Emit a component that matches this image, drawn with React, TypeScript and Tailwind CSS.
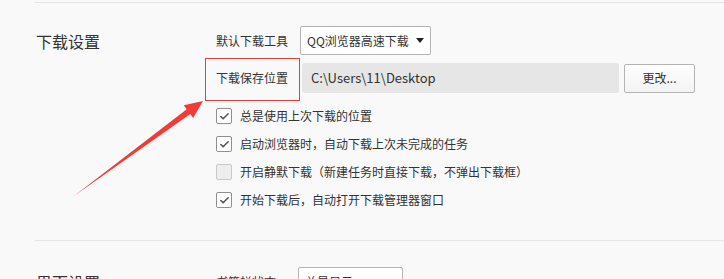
import { Check } from 'lucide-react';

const options = [
  { label: '总是使用上次下载的位置', checked: true },
  { label: '启动浏览器时，自动下载上次未完成的任务', checked: true },
  { label: '开启静默下载（新建任务时直接下载，不弹出下载框）', checked: false },
  { label: '开始下载后，自动打开下载管理器窗口', checked: true },
];

function SelectBox({ value, width }: { value: string; width: string }) {
  return (
    <div
      className={`flex h-[29px] ${width} items-center justify-between rounded-[2px] border border-[#b4b4b4] bg-white pl-[6px] pr-[6px] text-[12px]`}
    >
      <span className="whitespace-nowrap">{value}</span>
      <span className="h-0 w-0 border-x-[4px] border-t-[5px] border-x-transparent border-t-[#222]" />
    </div>
  );
}

function Checkbox({ checked }: { checked: boolean }) {
  return (
    <span
      className={`flex h-[16px] w-[16px] items-center justify-center rounded-[2px] border ${
        checked ? 'border-[#8f8f8f] bg-white' : 'border-[#c8c8c8] bg-[#eeeeee]'
      }`}
    >
      {checked && <Check size={11} strokeWidth={3.5} className="text-[#555]" />}
    </span>
  );
}

export default function App() {
  return (
    <div className="relative h-[279px] w-[724px] overflow-hidden bg-[#f9f9f9] font-['Noto_Sans_CJK_SC','Microsoft_YaHei',sans-serif] text-[#333]">
      <div className="pl-[35px] pt-[2px]">
        {/* 下载设置 */}
        <section className="flex border-t border-[#e6e6e6] pb-[26px] pt-[23px]">
          <h2 className="mt-[5px] w-[181px] pl-px text-[16px] leading-[20px]">下载设置</h2>
          <div className="flex flex-col">
            <div className="flex h-[29px] items-center">
              <span className="w-[84px] text-[12px]">默认下载工具</span>
              <SelectBox value="QQ浏览器高速下载" width="w-[131px]" />
            </div>
            <div className="mt-[8px] flex h-[30px] items-center">
              <span className="w-[86px] text-[12px]">下载保存位置</span>
              <div className="flex h-[30px] w-[317px] items-center rounded-[3px] bg-[#e6e6e6] pl-[9px] text-[13px]">
                C:\Users\11\Desktop
              </div>
              <button className="ml-[5px] h-[29px] w-[71px] rounded-[2px] border border-[#b4b4b4] bg-gradient-to-b from-white to-[#f3f3f3] text-[12px]">
                更改...
              </button>
            </div>
            <ul className="mt-[9px] flex flex-col">
              {options.map((o) => (
                <li key={o.label} className="flex h-[28px] items-center gap-[8px] text-[12px]">
                  <Checkbox checked={o.checked} />
                  <span className="whitespace-nowrap">{o.label}</span>
                </li>
              ))}
            </ul>
          </div>
        </section>

        {/* 界面设置 */}
        <section className="flex border-t border-[#e6e6e6] pt-[26px]">
          <h2 className="mt-[5px] w-[181px] pl-px text-[16px] leading-[20px]">界面设置</h2>
          <div className="flex h-[29px] items-center">
            <span className="w-[82px] text-[12px]">书签栏状态</span>
            <SelectBox value="总是显示" width="w-[105px]" />
          </div>
        </section>
      </div>

      {/* annotation */}
      <div className="absolute left-[205px] top-[58px] h-[43px] w-[95px] border border-[#d9443e]" />
      <svg className="absolute left-0 top-0" width="724" height="279" viewBox="0 0 724 279">
        <polygon
          points="74,196 186.7,109.3 183.8,105.3 203,101 193.2,118.1 190.3,114.1"
          fill="#f23b37"
        />
      </svg>
    </div>
  );
}
